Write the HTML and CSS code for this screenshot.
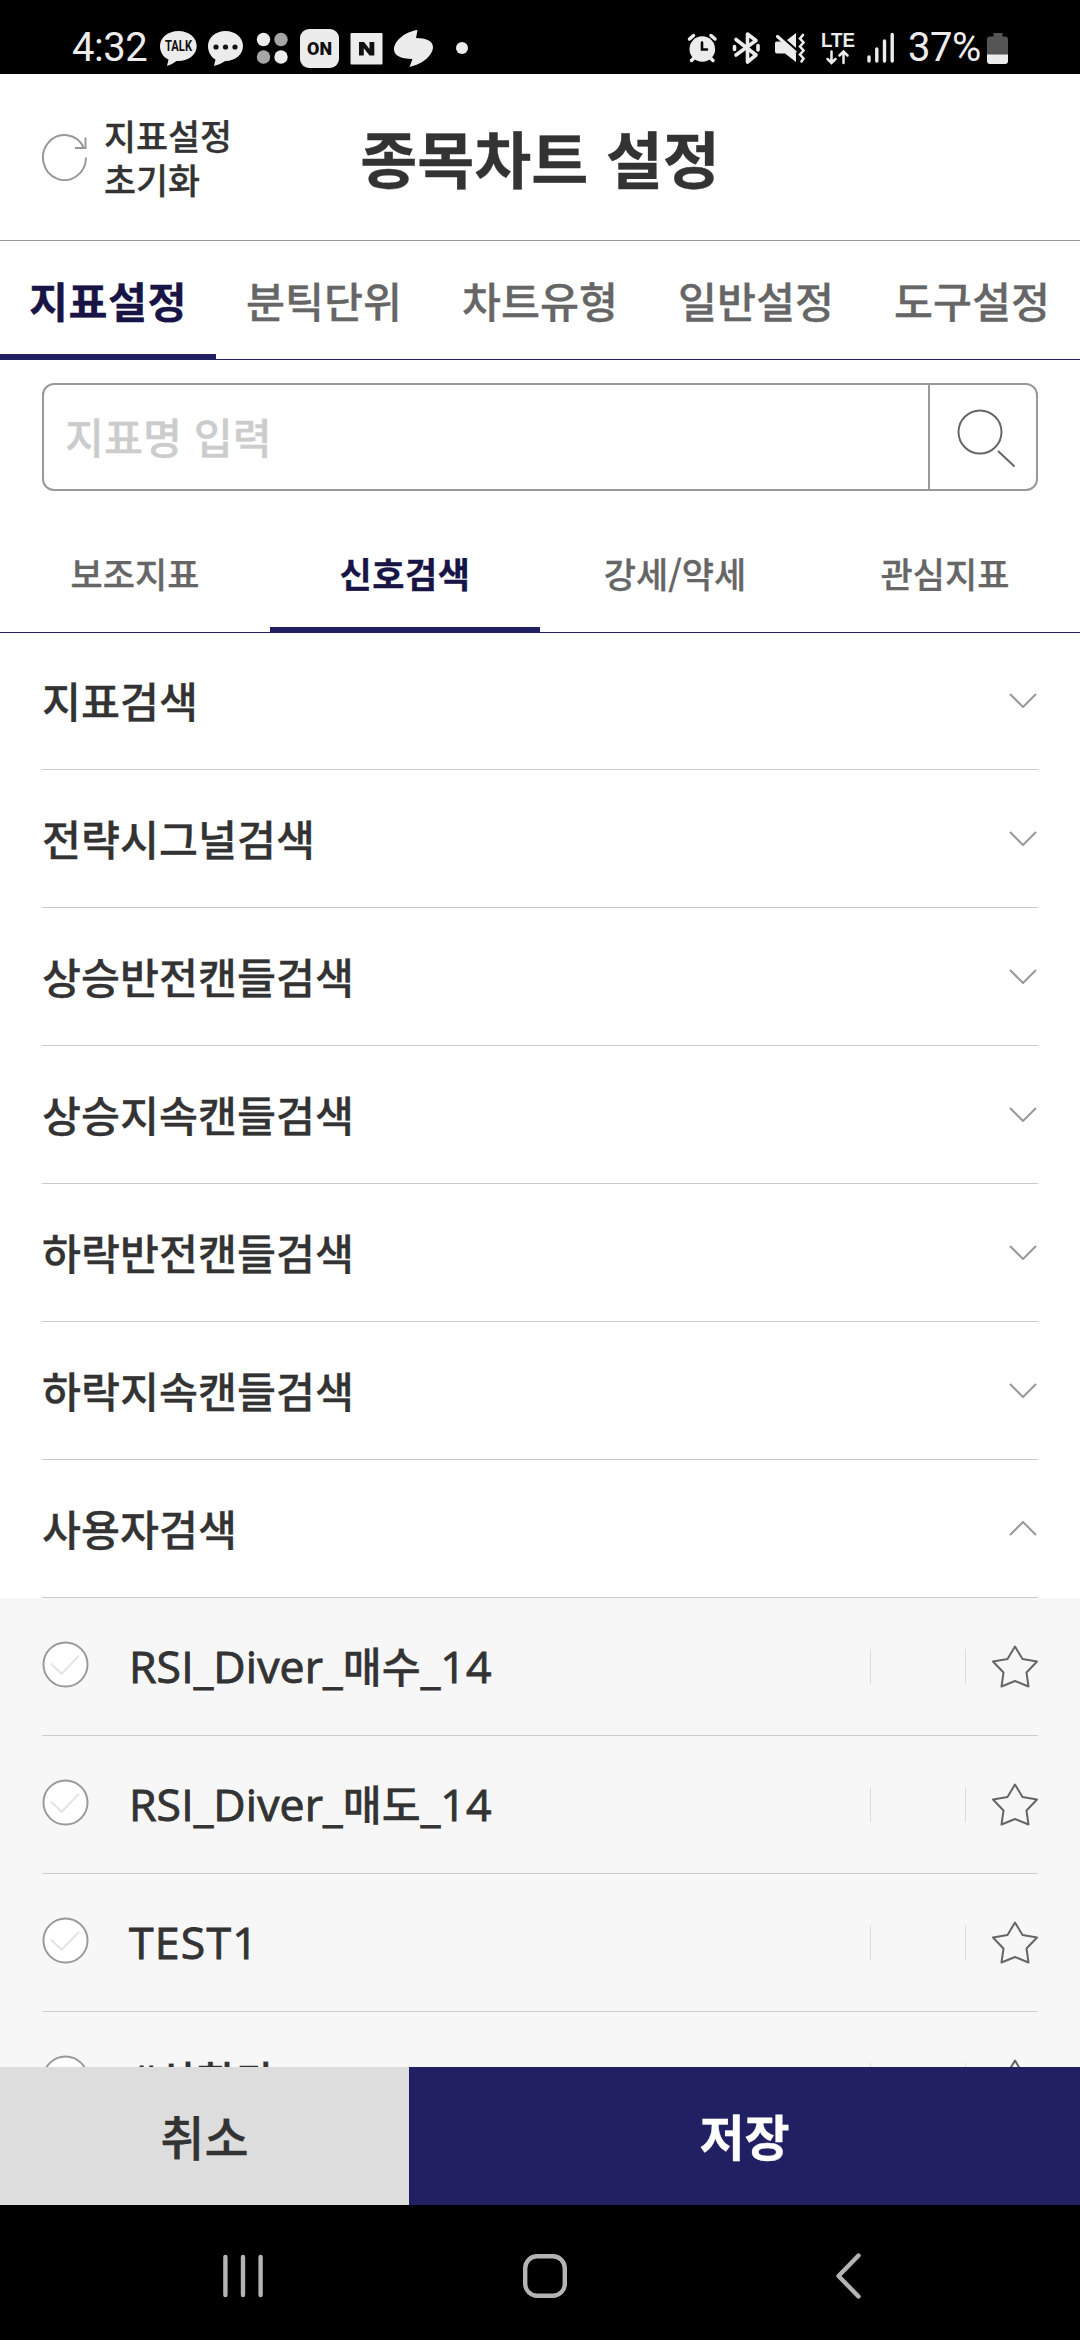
FILE: index.html
```html
<!DOCTYPE html>
<html lang="ko">
<head>
<meta charset="utf-8">
<title>종목차트 설정</title>
<link rel="stylesheet" href="styles.css">
</head>
<body>
<div class="screen">
  <div class="status">
    <span class="clock">4:32</span>
    <svg class="notif" width="330" height="74" viewBox="150 0 330 74" fill="#ececec">
      <path d="M178.500 31c10.200 0 18.200 6.600 18.200 15s-8 15-18.200 15l-2 0c-3 2-6 4-9.500 5l1.500-6.500C163 57 160 52 160 46c0-8.400 8.300-15 18.500-15z"/>
      <text class="badge-talk" x="178.500" y="51" text-anchor="middle" textLength="27" lengthAdjust="spacingAndGlyphs">TALK</text>
      <path d="M225.500 31c9.700 0 17.500 6.600 17.500 15s-7.800 15-17.500 15c-4 2-7 4-11.500 5l1.500-6.500C211 57 208 52 208 46c0-8.400 7.800-15 17.500-15z"/>
      <g fill="#111"><circle cx="216" cy="47" r="2.600"/><circle cx="225.500" cy="47" r="2.600"/><circle cx="235" cy="47" r="2.600"/></g>
      <circle cx="263.500" cy="39.500" r="6.700"/><circle cx="281" cy="57" r="6.700"/>
      <g fill="#a6a6a6"><circle cx="281" cy="39.500" r="6.700"/><circle cx="263.500" cy="57" r="6.700"/></g>
      <rect x="300" y="29" width="39" height="39" rx="9"/>
      <text class="badge-on" x="319.500" y="55" text-anchor="middle" textLength="25" lengthAdjust="spacingAndGlyphs">ON</text>
      <rect x="350.500" y="33" width="32" height="31.500" rx="1"/>
      <path fill="#111" d="M359 55.500V42h5l5.500 7V42h4.800v13.500h-4.800l-5.700-7.200v7.200z"/>
      <path d="M417.500 30C405 31.500 394 41 394 49.500c0 5.500 6 9.500 18.500 9.500l-3 8C423 64 433 55 433 47c0-6-7-9-17-9z"/>
      <circle cx="462" cy="48" r="6"/>
    </svg>
    <svg class="system" width="220" height="74" viewBox="680 0 220 74" fill="#ececec" stroke="#ececec" stroke-linecap="round">
      <g stroke-width="3.500"><path d="M689.500 39l4-3.500M715 39l-4-3.500M694 58l-2.500 2.500M710.500 58l2.500 2.500" /></g>
      <circle cx="702.300" cy="49" r="12.800" stroke="none"/>
      <path d="M702 42.500V49.500h5" fill="none" stroke="#000" stroke-width="2.600"/>
      <path d="M736 39.500l20 15.500-8.500 7V34l8.500 6.500L736 55M734.500 46.500v3M758 45.500v4.500" fill="none" stroke-width="3.600" stroke-linejoin="round"/>
      <path stroke="none" d="M775 43q0-1.500 2-1.500h5.500L796 54v8l-11-8.500h-8q-2 0-2-2zM787 40l9-7v15z"/>
      <path d="M777.500 36.500L795 52" fill="none" stroke-width="3.200"/>
      <path d="M803 35l-3 3.500 3.500 4-3.500 4 3.500 4-3.500 4 3.500 4-2 3" fill="none" stroke-width="2.600"/>
      <text class="lte" x="838" y="46.500" text-anchor="middle" textLength="34" lengthAdjust="spacingAndGlyphs" stroke="none">LTE</text>
      <path d="M831.500 51.500V63M827.500 59l4 4 4-4M843.500 63V51.500M839.500 55.500l4-4 4 4" fill="none" stroke-width="2.500"/>
      <path d="M869 57v4M876.800 49v12M884.500 41v20M892.200 34.500V61" fill="none" stroke-width="3.400"/>
    </svg>
    <span class="percent">37%</span>
    <svg class="battery" width="22" height="32" viewBox="0 0 22 32"><path fill="#555" d="M6.500 0h9v3.500H18q3 0 3 3V22H0V6.500q0-3 3-3h3.500z"/><path fill="#ececec" d="M0 21.500h21V28q0 3-3 3H3q-3 0-3-3z"/></svg>
  </div>

  <header class="header">
    <button class="reset">
      <svg width="46" height="48" viewBox="0 0 46 48" fill="none" stroke="#999" stroke-width="2"><path d="M44 24.500A21.500 22.500 0 1 1 41.500 14"/><path d="M43.500 4.500V15H33"/></svg>
      <span>지표설정<br>초기화</span>
    </button>
    <h1 class="title">종목차트 설정</h1>
  </header>

  <nav class="tabs">
    <a class="tab active">지표설정</a><a class="tab">분틱단위</a><a class="tab">차트유형</a><a class="tab">일반설정</a><a class="tab">도구설정</a>
  </nav>

  <div class="search">
    <span class="placeholder">지표명 입력</span>
    <span class="find"><svg width="60" height="62" viewBox="0 0 60 62" fill="none" stroke="#666" stroke-width="2"><circle cx="24" cy="24" r="21.500"/><path d="M42 43l16.500 15.500"/></svg></span>
  </div>

  <nav class="tabs sub">
    <a class="tab">보조지표</a><a class="tab active">신호검색</a><a class="tab">강세/약세</a><a class="tab">관심지표</a>
  </nav>

  <main class="list">
    <div class="row first"><span>지표검색</span><svg class="chev" viewBox="0 0 28 15"><path d="M1 1l13 13L27 1"/></svg></div>
    <div class="row"><span>전략시그널검색</span><svg class="chev" viewBox="0 0 28 15"><path d="M1 1l13 13L27 1"/></svg></div>
    <div class="row"><span>상승반전캔들검색</span><svg class="chev" viewBox="0 0 28 15"><path d="M1 1l13 13L27 1"/></svg></div>
    <div class="row"><span>상승지속캔들검색</span><svg class="chev" viewBox="0 0 28 15"><path d="M1 1l13 13L27 1"/></svg></div>
    <div class="row"><span>하락반전캔들검색</span><svg class="chev" viewBox="0 0 28 15"><path d="M1 1l13 13L27 1"/></svg></div>
    <div class="row"><span>하락지속캔들검색</span><svg class="chev" viewBox="0 0 28 15"><path d="M1 1l13 13L27 1"/></svg></div>
    <div class="row"><span>사용자검색</span><svg class="chev" viewBox="0 0 28 15"><path d="M1 14L14 1l13 13"/></svg></div>
    <div class="items">
      <div class="row item"><svg class="check" viewBox="0 0 48 48"><circle cx="24" cy="24" r="22.500"/><path d="M9 23l11 10.500L38 15"/></svg><span class="name"><b>RSI_Diver_</b>매수<b>_14</b></span><i class="bar"></i><i class="bar"></i><svg class="star" viewBox="0 0 46 43"><path d="M23 1.500l7.500 12.500 14.500 2.500-10.500 11 2 14L23 36 9.500 41.500l2-14L1 16.500 15.500 14z"/></svg></div>
      <div class="row item"><svg class="check" viewBox="0 0 48 48"><circle cx="24" cy="24" r="22.500"/><path d="M9 23l11 10.500L38 15"/></svg><span class="name"><b>RSI_Diver_</b>매도<b>_14</b></span><i class="bar"></i><i class="bar"></i><svg class="star" viewBox="0 0 46 43"><path d="M23 1.500l7.500 12.500 14.500 2.500-10.500 11 2 14L23 36 9.500 41.500l2-14L1 16.500 15.500 14z"/></svg></div>
      <div class="row item"><svg class="check" viewBox="0 0 48 48"><circle cx="24" cy="24" r="22.500"/><path d="M9 23l11 10.500L38 15"/></svg><span class="name caps"><b>TEST1</b></span><i class="bar"></i><i class="bar"></i><svg class="star" viewBox="0 0 46 43"><path d="M23 1.500l7.500 12.500 14.500 2.500-10.500 11 2 14L23 36 9.500 41.500l2-14L1 16.500 15.500 14z"/></svg></div>
      <div class="row item"><svg class="check" viewBox="0 0 48 48"><circle cx="24" cy="24" r="22.500"/><path d="M9 23l11 10.500L38 15"/></svg><span class="name"><b>#</b>상한가</span><i class="bar"></i><i class="bar"></i><svg class="star" viewBox="0 0 46 43"><path d="M23 1.500l7.500 12.500 14.500 2.500-10.500 11 2 14L23 36 9.500 41.500l2-14L1 16.500 15.500 14z"/></svg></div>
    </div>
  </main>

  <footer class="actions">
    <button class="cancel">취소</button>
    <button class="save">저장</button>
  </footer>

  <div class="navbar">
    <svg width="1080" height="135" viewBox="0 0 1080 135" fill="none" stroke="#b4b4b4" stroke-width="4.400" stroke-linecap="round" stroke-linejoin="round">
      <path d="M225.400 52v38M243 52v38M260.600 52v38"/>
      <rect x="525.200" y="51.200" width="39.600" height="39.600" rx="12"/>
      <path d="M858.500 50.500L838.500 71l20 20.500"/>
    </svg>
  </div>
</div>
</body>
</html>
```
FILE: styles.css
```css
* { box-sizing: border-box; }
body { margin: 0; background: #fff; }
button { border: 0; background: none; padding: 0; font: inherit; color: inherit; }
svg { display: block; flex: none; }

.screen {
  width: 1080px;
  height: 2340px;
  display: flex;
  flex-direction: column;
  overflow: hidden;
  color: #333;
  font-family: "Noto Sans CJK KR", sans-serif;
  font-size: 42.400px;
  font-weight: 500;
  -webkit-text-stroke-width: 0.300px;
}

.status {
  flex: none;
  height: 74px;
  display: flex;
  background: #000;
  color: #ececec;
  font-family: Roboto, sans-serif;
  font-size: 40px;
  font-weight: 400;
  line-height: 96px;
  -webkit-text-stroke-width: 0;
}
.clock { width: 150px; padding-left: 72px; letter-spacing: -0.500px; }
.system { margin-left: 200px; }
.percent { width: 87px; padding-left: 8px; letter-spacing: -0.500px; white-space: nowrap; }
.battery { margin-top: 33px; }
.badge-talk { font: 700 14px Roboto, sans-serif; fill: #111; }
.badge-on { font: 900 18px Roboto, sans-serif; fill: #111; }
.lte { font: 700 20px "Liberation Sans", sans-serif; }

.header {
  flex: none;
  height: 167px;
  display: grid;
  grid-template-columns: 1fr auto 1fr;
  align-items: center;
  padding: 0 42px;
  border-bottom: 1px solid #999;
}
.reset {
  display: flex;
  align-items: center;
  gap: 16px;
  text-align: left;
  font-size: 34.800px;
  line-height: 44px;
}
.reset span { padding-bottom: 1px; }
.title { margin: 0; font-size: 62px; font-weight: 700; line-height: 90px; }

.tabs {
  flex: none;
  height: 119px;
  display: flex;
  border-bottom: 1px solid #212063;
  color: #666;
}
.tab {
  flex: 1;
  height: 119px;
  line-height: 117px;
  text-align: center;
  white-space: nowrap;
}
.tab.active { color: #181546; font-weight: 700; letter-spacing: 0.500px; border-bottom: 6px solid #212063; }
.tabs.sub { height: 116px; margin-top: 26px; font-size: 35px; }
.sub .tab { height: 116px; line-height: 112px; }

.search {
  flex: none;
  display: flex;
  height: 108px;
  margin: 23px 42px 0;
  border: 2px solid #999;
  border-radius: 12px;
}
.placeholder { flex: 1; padding-left: 21px; line-height: 102px; color: #ccc; }
.find { width: 108px; padding: 23px 0 0 26px; border-left: 2px solid #999; }

.list { flex: 1; min-height: 0; overflow: hidden; }
.row {
  height: 138px;
  margin: 0 42px;
  display: flex;
  align-items: center;
  justify-content: space-between;
  border-bottom: 1px solid #ccc;
}
.row > span { padding-bottom: 3px; }
.row.first { height: 137px; }
.chev { width: 28px; height: 15px; margin: 0 1px 1px 0; fill: none; stroke: #999; stroke-width: 2; }
.items { background: #f7f7f7; }
.check { width: 47px; height: 47px; margin-top: -5px; }
.check circle { fill: #fff; stroke: #999; stroke-width: 2; }
.check path { fill: none; stroke: #e4e4e4; stroke-width: 2; }
.name { flex: 1; padding-left: 40px; }
.name b {
  font: 500 44.600px "Open Sans", sans-serif;
  letter-spacing: 0.100px;
  -webkit-text-stroke-width: 0.900px;
}
.name.caps b { letter-spacing: 1.200px; }
.bar { width: 1px; height: 35px; margin-right: 94px; background: #ddd; }
.bar + .bar { margin-right: 26px; }
.star { width: 46px; height: 43px; fill: none; stroke: #666; stroke-width: 2; stroke-linejoin: round; }

.actions { flex: none; height: 138px; display: flex; font-size: 48px; }
.actions button { padding-bottom: 3px; }
.cancel { width: 409px; background: #ddd; }
.save { flex: 1; background: #212063; color: #fff; font-size: 49px; font-weight: 700; }
.navbar { flex: none; height: 135px; background: #000; }
```
